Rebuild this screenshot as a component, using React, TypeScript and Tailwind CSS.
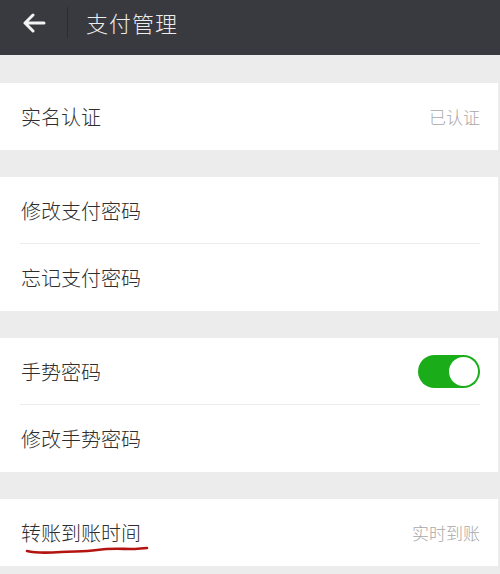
import { useState } from 'react';

const font = { fontFamily: '"Noto Sans CJK SC", "Noto Sans", sans-serif' };

function Row({
  label,
  value,
  divider,
  children,
}: {
  label: React.ReactNode;
  value?: string;
  divider?: boolean;
  children?: React.ReactNode;
}) {
  return (
    <div className="relative flex h-[67px] items-center justify-between pl-[21px] pr-[18px]">
      <span className="text-[20px] font-light text-[#2e2e2e]">{label}</span>
      {value && <span className="text-[17px] font-light text-[#a8a8a8]">{value}</span>}
      {children}
      {divider && <div className="absolute bottom-0 left-[20px] right-[18px] h-px bg-[#ececec]" />}
    </div>
  );
}

function Toggle() {
  const [on, setOn] = useState(true);
  return (
    <button
      onClick={() => setOn(!on)}
      className={`flex h-[33px] w-[62px] items-center rounded-full p-[2px] ${
        on ? 'justify-end bg-[#1aad19]' : 'justify-start bg-[#dcdcdc]'
      }`}
    >
      <span className="block h-[29px] w-[29px] rounded-full bg-white" />
    </button>
  );
}

export default function App() {
  return (
    <div className="h-[574px] w-[500px] overflow-hidden bg-[#ececec]" style={font}>
      {/* Top bar */}
      <div className="flex h-[55px] items-start bg-[#393a3f] pt-[7px]">
        <div className="flex h-[31px] w-[67px] items-center justify-center">
          <svg width="24" height="20" viewBox="0 0 24 20" fill="none">
            <path d="M22 10H3M11 2L3 10l8 8" stroke="#f2f2f2" strokeWidth="3" strokeLinecap="round" strokeLinejoin="round" />
          </svg>
        </div>
        <div className="h-[31px] w-px bg-[#2c2d31]" />
        <span className="ml-[18px] text-[22px] font-light leading-[31px] tracking-[1px] text-[#ececec]">支付管理</span>
      </div>

      <div className="mr-[2px] flex flex-col pt-[28px]">
        <div className="bg-white">
          <Row label="实名认证" value="已认证" />
        </div>

        <div className="mt-[27px] bg-white">
          <Row label="修改支付密码" divider />
          <Row label="忘记支付密码" />
        </div>

        <div className="mt-[27px] bg-white">
          <Row label="手势密码" divider>
            <Toggle />
          </Row>
          <Row label="修改手势密码" />
        </div>

        <div className="mt-[27px] bg-white">
          <Row
            label={
              <span className="relative">
                转账到账时间
                <svg
                  className="absolute left-[4px] top-[27px]"
                  width="124"
                  height="10"
                  viewBox="0 0 124 10"
                  fill="none"
                >
                  <path
                    d="M2 6C10 8 22 8 36 7C50 6 58 7 72 5C86 3 96 4 106 4C112 4 118 3 122 3"
                    stroke="#b4140f"
                    strokeWidth="2.6"
                    strokeLinecap="round"
                  />
                </svg>
              </span>
            }
            value="实时到账"
          />
        </div>
      </div>
    </div>
  );
}
